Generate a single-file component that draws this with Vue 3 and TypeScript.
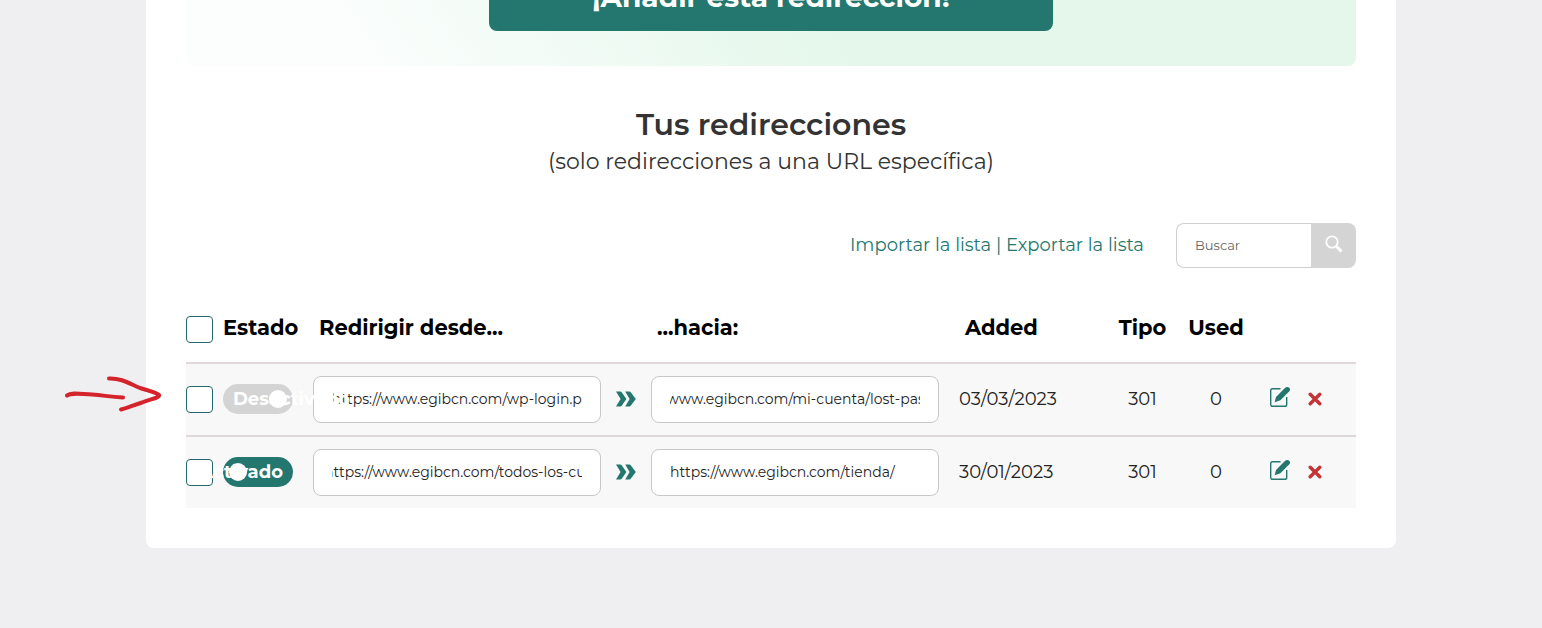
<script setup lang="ts">
import { onMounted, ref } from 'vue'

interface Redirect {
  id: number
  active: boolean
  from: string
  fromScroll: number
  to: string
  toScroll: number
  added: string
  type: number
  used: number
}

const redirects = ref<Redirect[]>([
  {
    id: 1,
    active: false,
    from: 'https://www.egibcn.com/wp-login.php',
    fromScroll: 0,
    to: 'https://www.egibcn.com/mi-cuenta/lost-password/',
    toScroll: 52,
    added: '03/03/2023',
    type: 301,
    used: 0,
  },
  {
    id: 2,
    active: true,
    from: 'https://www.egibcn.com/todos-los-cursos/',
    fromScroll: 8,
    to: 'https://www.egibcn.com/tienda/',
    toScroll: 0,
    added: '30/01/2023',
    type: 301,
    used: 0,
  },
])

const search = ref('')
const table = ref<HTMLTableElement | null>(null)

onMounted(() => {
  table.value?.querySelectorAll<HTMLInputElement>('input[data-scroll]').forEach((el) => {
    el.scrollLeft = Number(el.dataset.scroll)
  })
})
</script>

<template>
  <div class="page">
    <main class="card">
      <section class="panel">
        <button type="button" class="add">¡Añadir esta redirección!</button>
      </section>

      <header class="heading">
        <h2>Tus redirecciones</h2>
        <p>(solo redirecciones a una URL específica)</p>
      </header>

      <div class="toolbar">
        <div class="links">
          <a href="#importar">Importar la lista</a> | <a href="#exportar">Exportar la lista</a>
        </div>
        <form class="search" @submit.prevent>
          <input v-model="search" type="text" placeholder="Buscar" aria-label="Buscar" />
          <button type="submit" aria-label="Buscar">
            <svg width="18" height="18" viewBox="0 0 18 18" fill="none" stroke="#fff">
              <circle cx="7" cy="7" r="5.7" stroke-width="1.8" />
              <path d="M11.3 11.3L12.4 12.4" stroke-width="1.8" />
              <path d="M12.6 12.6L15.6 15.6" stroke-width="3" stroke-linecap="round" />
            </svg>
          </button>
        </form>
      </div>

      <table ref="table" class="list">
        <colgroup>
          <col class="c-check" />
          <col class="c-state" />
          <col />
          <col class="c-arrow" />
          <col />
          <col class="c-added" />
          <col class="c-type" />
          <col class="c-used" />
          <col class="c-actions" />
        </colgroup>
        <thead>
          <tr>
            <th class="box"><input type="checkbox" class="check" aria-label="Seleccionar todo" /></th>
            <th>Estado</th>
            <th class="indent">Redirigir desde...</th>
            <th></th>
            <th class="indent">...hacia:</th>
            <th class="added-head">Added</th>
            <th class="center">Tipo</th>
            <th class="center">Used</th>
            <th></th>
          </tr>
        </thead>
        <tbody>
          <tr v-for="r in redirects" :key="r.id">
            <td class="box"><input type="checkbox" class="check" :aria-label="'Seleccionar ' + r.id" /></td>
            <td>
              <button
                type="button"
                role="switch"
                :aria-checked="r.active"
                class="toggle"
                :class="{ on: r.active }"
                @click="r.active = !r.active"
              >
                <span class="label">{{ r.active ? 'Activado' : 'Desactivado' }}</span>
                <span class="knob"></span>
              </button>
            </td>
            <td class="box">
              <input v-model="r.from" type="text" class="url" :data-scroll="r.fromScroll" aria-label="Redirigir desde" />
            </td>
            <td class="center">
              <svg class="chevrons" width="22" height="16" viewBox="0 0 22 16" fill="#24776f">
                <path d="M1 0.6H5.4Q6.2 0.6 6.7 1.3L11.4 8L6.7 14.7Q6.2 15.4 5.4 15.4H1L5.6 8Z" />
                <path d="M10.2 0.6H14.4Q15.2 0.6 15.7 1.3L20.8 8L15.7 14.7Q15.2 15.4 14.4 15.4H10.2L14.6 8Z" />
              </svg>
            </td>
            <td class="box">
              <input v-model="r.to" type="text" class="url" :data-scroll="r.toScroll" aria-label="Hacia" />
            </td>
            <td class="added">{{ r.added }}</td>
            <td class="center">{{ r.type }}</td>
            <td class="center">{{ r.used }}</td>
            <td>
              <div class="actions">
                <button type="button" class="edit" aria-label="Editar">
                  <svg width="22" height="22" viewBox="0 0 22 22" fill="none">
                    <path
                      d="M11.5 2.8H3.6Q1.7 2.8 1.7 4.7V18.4Q1.7 20.3 3.6 20.3H15.8Q17.7 20.3 17.7 18.4V11"
                      stroke="#24776f"
                      stroke-width="1.4"
                    />
                    <path
                      d="M5.6 16.3L7 10.9L15.4 2.5Q17.6 0.4 19.9 1.4Q22 2.8 20.3 5.3L11.4 14.2Z"
                      fill="#24776f"
                    />
                  </svg>
                </button>
                <button type="button" aria-label="Eliminar">
                  <svg width="14" height="14" viewBox="0 0 14 14" fill="none">
                    <path d="M2.2 2.2L11.8 11.8M11.8 2.2L2.2 11.8" stroke="#c23436" stroke-width="3.4" stroke-linecap="round" />
                  </svg>
                </button>
              </div>
            </td>
          </tr>
        </tbody>
      </table>

      <svg class="mark" width="100" height="38" viewBox="0 0 100 38" fill="none" stroke="#d4232b" stroke-width="4" stroke-linecap="round" stroke-linejoin="round">
        <path d="M3 20.5C8 17 16 19 28 19.5C40 20 44 22 59 22.5" />
        <path d="M45 3.5C58 3 66 9 76 13C84 15.5 93 17.5 95 20C96 23 86 24 78 27.5C70 30 64 32.5 57 34.5" />
      </svg>
    </main>
  </div>
</template>

<style>
body {
  margin: 0;
  background: #efeff1;
}
</style>

<style scoped>
.page,
.page * {
  box-sizing: border-box;
}

.page {
  min-height: 100vh;
  padding: 0 24px;
  background: #efeff1;
  color: #222;
  font-family: Montserrat, Inter, 'Open Sans', sans-serif;
  font-weight: 400;
}

button,
input {
  font-family: inherit;
}

button {
  cursor: pointer;
}

.card {
  position: relative;
  max-width: 1250px;
  margin: 0 auto;
  padding: 0 40px 40px;
  background: #fff;
  border-radius: 0 0 8px 8px;
}

.panel {
  display: flex;
  align-items: flex-end;
  justify-content: center;
  height: 66px;
  padding-bottom: 35px;
  overflow: hidden;
  border-radius: 0 0 8px 8px;
  background: linear-gradient(55deg, #fbfefd 15%, #e4f7ea 56%);
}

.add {
  flex: none;
  width: 564px;
  height: 68px;
  padding: 0;
  border: 0;
  border-radius: 8px;
  background: #24776f;
  color: #fff;
  font-size: 28px;
  font-weight: 700;
}

.heading {
  padding-top: 40px;
  text-align: center;
  color: #333;
}

h2 {
  margin: 0;
  font-size: 30px;
  line-height: 38px;
  font-weight: 600;
}

p {
  margin: 0;
  font-size: 22px;
  line-height: 36px;
}

.toolbar {
  display: flex;
  align-items: center;
  justify-content: flex-end;
  gap: 32px;
  margin: 43px 0 28px;
}

.links {
  padding-bottom: 2px;
  font-size: 18px;
  color: #24776f;
}

.links a {
  color: inherit;
  text-decoration: none;
}

.search {
  display: flex;
  width: 180px;
  height: 45px;
}

.search input {
  flex: 1;
  min-width: 0;
  padding: 0 18px 2px;
  border: 1px solid #d0d0d0;
  border-right: 0;
  border-radius: 8px 0 0 8px;
  background: #fff;
  font-size: 13px;
}

.search input::placeholder {
  color: #666;
  opacity: 1;
}

.search button {
  display: flex;
  align-items: center;
  justify-content: center;
  width: 45px;
  padding: 0 0 4px;
  border: 0;
  border-radius: 0 8px 8px 0;
  background: #d4d4d4;
}

.list {
  width: 100%;
  table-layout: fixed;
  border-collapse: separate;
  border-spacing: 0;
  font-size: 18px;
}

.c-check { width: 37px; }
.c-state { width: 90px; }
.c-arrow { width: 50px; }
.c-added { width: 170px; }
.c-type { width: 67px; }
.c-used { width: 80px; }
.c-actions { width: 100px; }

th {
  height: 66px;
  padding: 0 0 4px;
  color: #000;
  font-size: 21px;
  font-weight: 700;
  text-align: left;
  white-space: nowrap;
}

td {
  height: 73px;
  padding: 0 0 2px;
  border-top: 2px solid #e1d9d9;
  background: #f8f8f8;
}

.box { padding: 0; }
.indent { padding-left: 6px; }
.added { padding-left: 20px; }
.added-head { padding-left: 26px; }
.center { text-align: center; }

.check {
  display: block;
  width: 27px;
  height: 27px;
  margin: 0;
  appearance: none;
  border: 1px solid #24696f;
  border-radius: 4px;
  background: #fff;
}

.toggle {
  position: relative;
  z-index: 1;
  display: block;
  width: 70px;
  height: 30px;
  padding: 0;
  border: 0;
  border-radius: 15px;
  background: #d4d4d4;
  color: #fff;
  font-size: 18px;
  font-weight: 700;
}

.toggle.on {
  background: #24776f;
}

.label {
  position: absolute;
  top: 0;
  left: 10px;
  line-height: 30px;
}

.on .label {
  right: 10px;
  left: auto;
}

.knob {
  position: absolute;
  top: 6px;
  right: 6px;
  width: 18px;
  height: 18px;
  border-radius: 50%;
  background: #fff;
}

.on .knob {
  right: auto;
  left: 6px;
}

.url {
  display: block;
  width: 100%;
  height: 47px;
  padding: 0 18px 2px;
  border: 1px solid #c8c8c8;
  border-radius: 8px;
  background: #fff;
  color: #222;
  font-size: 14px;
}

.chevrons {
  display: block;
  margin: 0 auto;
}

.actions {
  display: flex;
  align-items: center;
  gap: 17px;
  padding-left: 13px;
}

.actions button {
  display: flex;
  padding: 0;
  border: 0;
  background: none;
}

.actions .edit {
  padding-bottom: 4px;
}

.mark {
  position: absolute;
  top: 375px;
  left: -82px;
}
</style>
